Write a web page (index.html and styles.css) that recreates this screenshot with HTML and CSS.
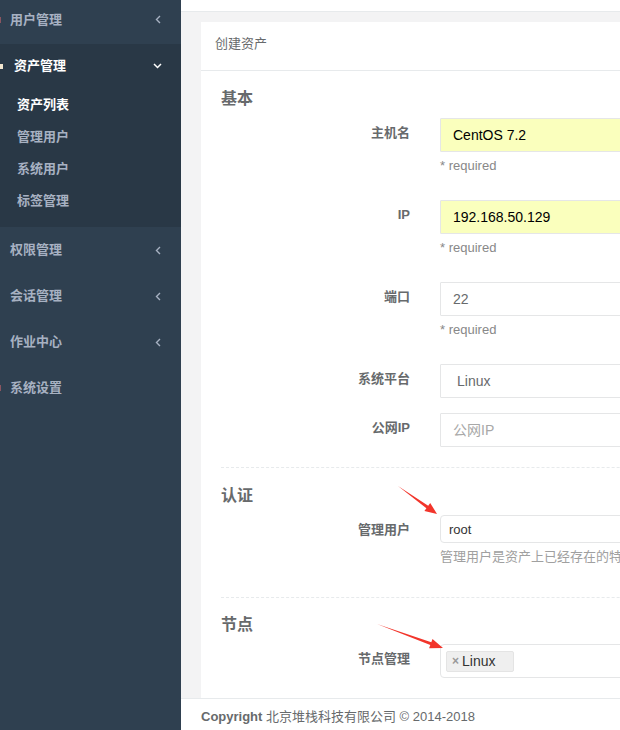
FILE: index.html
```html
<!DOCTYPE html>
<html lang="zh-CN">
<head>
<meta charset="utf-8">
<title>创建资产</title>
<link rel="stylesheet" href="styles.css">
</head>
<body>
<div class="layout">
  <nav class="sidebar">
    <div class="nav-item nav-first">
      <span class="nav-label"><i class="clip-icon clip-red"></i>用户管理</span>
      <svg class="chev" width="6" height="9" viewBox="0 0 6 9"><path d="M5 1 L1.5 4.5 L5 8" fill="none" stroke="#a7b1c2" stroke-width="1.4"/></svg>
    </div>
    <div class="nav-active">
      <div class="nav-item nav-head">
        <span class="nav-label"><i class="clip-icon clip-white"></i>资产管理</span>
        <svg class="chev-down" width="9" height="6" viewBox="0 0 9 6"><path d="M1 1 L4.5 4.5 L8 1" fill="none" stroke="#ffffff" stroke-width="1.5"/></svg>
      </div>
      <ul class="submenu">
        <li class="sub-item sub-current">资产列表</li>
        <li class="sub-item">管理用户</li>
        <li class="sub-item">系统用户</li>
        <li class="sub-item">标签管理</li>
      </ul>
    </div>
    <div class="nav-item">
      <span class="nav-label">权限管理</span>
      <svg class="chev" width="6" height="9" viewBox="0 0 6 9"><path d="M5 1 L1.5 4.5 L5 8" fill="none" stroke="#a7b1c2" stroke-width="1.4"/></svg>
    </div>
    <div class="nav-item">
      <span class="nav-label">会话管理</span>
      <svg class="chev" width="6" height="9" viewBox="0 0 6 9"><path d="M5 1 L1.5 4.5 L5 8" fill="none" stroke="#a7b1c2" stroke-width="1.4"/></svg>
    </div>
    <div class="nav-item">
      <span class="nav-label">作业中心</span>
      <svg class="chev" width="6" height="9" viewBox="0 0 6 9"><path d="M5 1 L1.5 4.5 L5 8" fill="none" stroke="#a7b1c2" stroke-width="1.4"/></svg>
    </div>
    <div class="nav-item">
      <span class="nav-label"><i class="clip-icon clip-red"></i>系统设置</span>
    </div>
  </nav>

  <div class="main">
    <div class="topbar"></div>
    <div class="wrapper">
      <div class="ibox">
        <div class="ibox-title">创建资产</div>
        <div class="ibox-content">
          <h3 class="section-title">基本</h3>

          <div class="form-group gap-req">
            <label class="form-label">主机名</label>
            <div class="form-field">
              <input class="form-input autofill" type="text" value="CentOS 7.2" readonly>
              <div class="help">* required</div>
            </div>
          </div>

          <div class="form-group gap-req">
            <label class="form-label">IP</label>
            <div class="form-field">
              <input class="form-input autofill" type="text" value="192.168.50.129" readonly>
              <div class="help">* required</div>
            </div>
          </div>

          <div class="form-group gap-req">
            <label class="form-label">端口</label>
            <div class="form-field">
              <input class="form-input" type="text" value="22" readonly>
              <div class="help">* required</div>
            </div>
          </div>

          <div class="form-group gap-plain">
            <label class="form-label">系统平台</label>
            <div class="form-field">
              <div class="form-input select-like">Linux</div>
            </div>
          </div>

          <div class="form-group gap-last">
            <label class="form-label">公网IP</label>
            <div class="form-field">
              <input class="form-input" type="text" placeholder="公网IP" readonly>
            </div>
          </div>

          <div class="hr-dashed"></div>

          <h3 class="section-title sec-after-hr">认证</h3>

          <div class="form-group gap-auth">
            <label class="form-label">管理用户</label>
            <div class="form-field">
              <div class="form-input small-select">root</div>
              <div class="help help-light">管理用户是资产上已经存在的特权用户，用于推送系统用户</div>
            </div>
          </div>

          <div class="hr-dashed"></div>

          <h3 class="section-title sec-after-hr2">节点</h3>

          <div class="form-group">
            <label class="form-label">节点管理</label>
            <div class="form-field">
              <div class="form-input multi-select">
                <span class="tag"><span class="tag-x">×</span>Linux</span>
              </div>
            </div>
          </div>
        </div>
      </div>
    </div>
    <div class="footer"><strong>Copyright</strong> 北京堆栈科技有限公司 © 2014-2018</div>
  </div>
</div>

<svg class="annot" width="620" height="730" viewBox="0 0 620 730">
  <polygon points="398,486 428.2,505.8 430.2,502.9 437,514 424.4,511.1 426.4,508.2" fill="#f2352b"/>
  <polygon points="377,624 431.3,642.2 432.5,638.9 443,648 429.1,648.3 430.3,645.0" fill="#f2352b"/>
</svg>
</body>
</html>
```

FILE: styles.css
```css
* { box-sizing: border-box; }

html, body {
  margin: 0;
  padding: 0;
  width: 620px;
  height: 730px;
  overflow: hidden;
}

body {
  font-family: "Liberation Sans", Arial, "Noto Sans CJK SC", sans-serif;
  font-size: 13px;
  color: #676a6c;
  background: #f3f3f4;
  position: relative;
}

.layout {
  display: flex;
  min-height: 730px;
  width: 900px;
}

/* Sidebar */
.sidebar {
  width: 181px;
  flex: none;
  background: #2f4050;
}

.nav-item {
  display: flex;
  align-items: center;
  justify-content: space-between;
  height: 46px;
  padding: 0 20px 0 10px;
  font-weight: 700;
  font-size: 13px;
  line-height: 20px;
  color: #a7b1c2;
}

.nav-first {
  height: 44px;
  padding-bottom: 5px;
}

.nav-label {
  position: relative;
}

.clip-icon {
  position: absolute;
  left: -10px;
  top: 7px;
  width: 1px;
  height: 6px;
}
.clip-red { background: #8a5560; }
.clip-white { background: #f2e6cf; left: -14px; width: 3px; height: 5px; top: 8px; }

.nav-active {
  background: #293846;
  padding-bottom: 10px;
}

.nav-head {
  height: 45px;
  padding-left: 14px;
  padding-bottom: 1px;
  color: #ffffff;
}

.chev-down { margin-right: -1px; }

.submenu {
  list-style: none;
  margin: 0;
  padding: 0;
}

.sub-item {
  height: 32px;
  line-height: 32px;
  padding-left: 17px;
  font-weight: 700;
  font-size: 13px;
  color: #a7b1c2;
}

.sub-current { color: #ffffff; }

/* Main */
.main {
  width: 719px;
  flex: none;
  display: flex;
  flex-direction: column;
  background: #f3f3f4;
}

.topbar {
  height: 12px;
  background: #ffffff;
  border-bottom: 1px solid #e7eaec;
}

.wrapper {
  padding: 10px 20px 0 20px;
}

.ibox {
  background: #ffffff;
}

.ibox-title {
  height: 49px;
  padding: 12px 14px 16px 14px;
  line-height: 20px;
  font-size: 13px;
  color: #676a6c;
  border-bottom: 1px solid #e7eaec;
}

.ibox-content {
  padding: 15px 20px 20px 20px;
  display: flex;
  flex-direction: column;
}

.section-title {
  margin: 0 0 6px 0;
  font-size: 16px;
  line-height: 26px;
  font-weight: 600;
  color: #676a6c;
}

.sec-after-hr { margin-top: 15px; }
.sec-after-hr2 { margin-top: 14px; }

.form-group {
  display: grid;
  grid-template-columns: 189px 1fr;
  column-gap: 30px;
}

.gap-req { margin-bottom: 25px; }
.gap-plain { margin-bottom: 15px; }
.gap-last { margin-bottom: 20px; }
.gap-auth { margin-bottom: 31px; }

.form-label {
  text-align: right;
  padding-top: 5px;
  line-height: 20px;
  font-weight: 700;
  font-size: 13px;
  color: #676a6c;
}

.form-field {
  display: flex;
  flex-direction: column;
}

.form-input {
  display: block;
  width: 100%;
  height: 34px;
  margin: 0;
  padding: 6px 12px;
  border: 1px solid #e5e6e7;
  border-radius: 1px;
  background: #ffffff;
  font-family: "Liberation Sans", Arial, "Noto Sans CJK SC", sans-serif;
  font-size: 14px;
  line-height: 20px;
  color: #676a6c;
  outline: none;
  -webkit-appearance: none;
  appearance: none;
}

.form-input::placeholder { color: #a8a8a8; }

.autofill {
  background: #faffbd;
  color: #000000;
}

.select-like { padding-left: 16px; }

.small-select {
  height: 28px;
  padding: 4px 8px;
  border-radius: 4px;
  font-size: 13px;
  color: #333333;
}

.multi-select {
  height: 34px;
  padding: 5px 5px;
  border-radius: 4px;
}

.tag {
  display: inline-flex;
  align-items: center;
  width: 68px;
  height: 21px;
  padding: 0 5px;
  background: #efefef;
  border: 1px solid #e4e4e4;
  border-radius: 2px;
  font-size: 14px;
  line-height: 19px;
  color: #333333;
}

.tag-x {
  color: #999999;
  font-weight: 700;
  font-size: 12px;
  margin-right: 3px;
}

.help {
  margin-top: 5px;
  line-height: 18px;
  font-size: 13px;
  color: #888888;
}

.help-light {
  color: #a0a0a0;
  white-space: nowrap;
}

.hr-dashed {
  height: 0;
  border-top: 1px dashed #e7eaec;
}

.footer {
  background: #ffffff;
  border-top: 1px solid #e7eaec;
  padding: 9px 20px 10px 20px;
  line-height: 18px;
  font-size: 13px;
  color: #676a6c;
  flex: 1;
}

.footer strong { font-weight: 700; }

.annot {
  position: absolute;
  left: 0;
  top: 0;
  pointer-events: none;
}
```
